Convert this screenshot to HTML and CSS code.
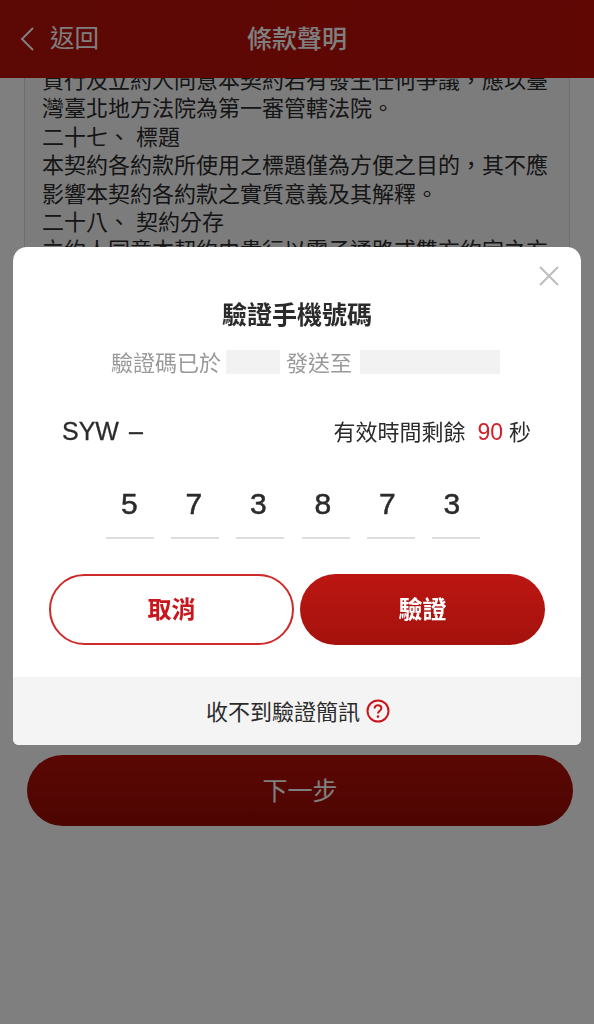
FILE: index.html
```html
<!DOCTYPE html>
<html lang="zh-Hant">
<head>
    <meta charset="UTF-8">
    <meta name="viewport" content="width=device-width, initial-scale=1.0">
    <title>條款聲明</title>
    <link rel="stylesheet" href="styles.css">
</head>
<body>
    <div class="page">
        <header class="topbar">
            <div class="back">
                <svg class="back-icon" viewBox="0 0 16 26" width="16" height="26">
                    <path d="M14 2 L3 13 L14 24" fill="none" stroke="#fff" stroke-width="2"/>
                </svg>
                <span>返回</span>
            </div>
            <h1>條款聲明</h1>
        </header>

        <section class="terms">
            <div class="terms-text">
                <p>責行及立約人同意本契約若有發生任何爭議，應以臺</p>
                <p>灣臺北地方法院為第一審管轄法院。</p>
                <p>二十七、 標題</p>
                <p>本契約各約款所使用之標題僅為方便之目的，其不應</p>
                <p>影響本契約各約款之實質意義及其解釋。</p>
                <p>二十八、 契約分存</p>
                <p>立約人同意本契約由貴行以電子通路或雙方約定之方</p>
            </div>
        </section>

        <button class="next-btn">下一步</button>
    </div>

    <!-- 驗證視窗 -->
    <div class="overlay">
        <div class="modal">
            <div class="modal-body">
                <svg class="close" viewBox="0 0 20 20" width="20" height="20">
                    <path d="M1 1 L19 19 M19 1 L1 19" stroke="#bdbdbd" stroke-width="2"/>
                </svg>
                <h2>驗證手機號碼</h2>
                <div class="sent">
                    <span>驗證碼已於</span>
                    <span class="mask mask-time"></span>
                    <span>發送至</span>
                    <span class="mask mask-phone"></span>
                </div>
                <div class="code-info">
                    <span class="prefix">SYW<i>–</i></span>
                    <span class="timer">有效時間剩餘<b>90</b>秒</span>
                </div>
                <div class="code-digits">
                    <span>5</span>
                    <span>7</span>
                    <span>3</span>
                    <span>8</span>
                    <span>7</span>
                    <span>3</span>
                </div>
                <div class="code-lines">
                    <span></span>
                    <span></span>
                    <span></span>
                    <span></span>
                    <span></span>
                    <span></span>
                </div>
                <div class="actions">
                    <button class="btn btn-outline">取消</button>
                    <button class="btn btn-solid">驗證</button>
                </div>
            </div>
            <div class="modal-foot">
                <span>收不到驗證簡訊</span>
                <svg viewBox="0 0 24 24" width="24" height="24">
                    <circle cx="12" cy="12" r="10.5" fill="none" stroke="#c8161d" stroke-width="2"/>
                    <path d="M8.6 9.4 C8.6 7.4 10.1 6.2 12 6.2 C13.9 6.2 15.4 7.4 15.4 9.2 C15.4 11.6 12 11.8 12 14.6" fill="none" stroke="#c8161d" stroke-width="2"/>
                    <circle cx="12" cy="17.6" r="1.3" fill="#c8161d"/>
                </svg>
            </div>
        </div>
    </div>
</body>
</html>
```

FILE: styles.css
```css
* {
  box-sizing: border-box;
}

html, body {
  height: 100%;
}

body {
  margin: 0;
  background: #fff;
  color: #2b2b2b;
  font-family: "Liberation Sans", "Noto Sans CJK TC", sans-serif;
  overflow: hidden;
}

.page {
  display: flex;
  flex-direction: column;
  height: 1024px;
}

/* Top bar */
.topbar {
  position: relative;
  display: flex;
  align-items: center;
  justify-content: center;
  flex: none;
  height: 78px;
  padding-bottom: 4px;
  background: linear-gradient(100deg, #b81008, #c00f08);
  color: #fff;
}

.topbar h1 {
  margin: 0;
  font-size: 25px;
  font-weight: 500;
}

.back {
  position: absolute;
  left: 19px;
  top: 24px;
  display: flex;
  align-items: center;
  gap: 15px;
  font-size: 24.5px;
  line-height: 30px;
}

.back-icon {
  display: block;
}

/* Terms */
.terms {
  flex: none;
  height: 660px;
  margin: 0 24px;
  padding: 0 17px;
  background: #f9f9f9;
  border: 1px solid #ddd;
  border-top: 0;
  overflow: hidden;
}

.terms-text {
  margin-top: -11px;
  font-size: 22px;
  line-height: 28.4px;
  white-space: nowrap;
}

.terms-text p {
  margin: 0;
}

.next-btn {
  flex: none;
  width: 546px;
  height: 71px;
  margin: 17px 0 0 27px;
  padding-bottom: 5px;
  border: 0;
  border-radius: 36px;
  background: linear-gradient(#b60f08, #9a0b04);
  color: #fff;
  font: inherit;
  font-size: 25px;
}

/* Overlay + modal */
.overlay {
  position: fixed;
  top: 0;
  left: 0;
  width: 100%;
  height: 100%;
  padding: 247px 13px 0;
  background: rgba(0, 0, 0, 0.5);
}

.modal {
  display: flex;
  flex-direction: column;
  height: 498px;
  background: #fff;
  border-radius: 14px 14px 6px 6px;
  overflow: hidden;
}

.modal-body {
  position: relative;
  flex: 1;
  padding: 52px 36px 0;
}

.close {
  position: absolute;
  top: 19px;
  right: 22px;
}

.modal-body h2 {
  margin: 0;
  color: #2b2b2b;
  font-size: 25px;
  font-weight: 700;
  line-height: 32px;
  text-align: center;
}

.sent {
  display: flex;
  align-items: center;
  height: 24px;
  margin: 19px 0 0 62px;
  color: #999;
  font-size: 22px;
}

.sent span:not(.mask) {
  margin-top: -2px;
}

.mask {
  height: 24px;
  background: #f2f2f2;
}

.mask-time {
  width: 54px;
  margin: 0 6px 0 5px;
}

.mask-phone {
  width: 140px;
  margin-left: 8px;
}

.code-info {
  display: flex;
  align-items: center;
  justify-content: space-between;
  height: 30px;
  margin: 42px 14px 0 13px;
  font-size: 22px;
}

.prefix {
  font-size: 25px;
  -webkit-text-stroke: 0.3px #2b2b2b;
}

.prefix i {
  margin-left: 10px;
  font-style: normal;
}

.timer {
  margin-top: -3px;
}

.timer b {
  margin: 0 6px 0 12px;
  color: #d0202a;
  font-weight: 400;
  font-size: 23px;
}

.code-digits {
  display: flex;
  margin: 37px 0 0 48px;
}

.code-digits span {
  width: 64.5px;
  height: 42px;
  font-size: 30px;
  line-height: 42px;
  text-align: center;
  -webkit-text-stroke: 0.5px #2b2b2b;
}

.code-lines {
  display: flex;
  gap: 17.2px;
  margin: 12px 0 0 57px;
}

.code-lines span {
  width: 48px;
  height: 2px;
  background: #ddd;
}

.actions {
  display: flex;
  gap: 6px;
  margin-top: 35px;
}

.btn {
  width: 245px;
  height: 71px;
  padding-bottom: 5px;
  border-radius: 36px;
  font: inherit;
  font-size: 24px;
  font-weight: 700;
}

.btn-outline {
  background: #fff;
  border: 2px solid #cf2a2a;
  color: #c8161d;
}

.btn-solid {
  background: linear-gradient(#bc1612, #a4120d);
  border: 0;
  color: #fff;
}

.modal-foot {
  display: flex;
  flex: none;
  align-items: center;
  justify-content: center;
  gap: 6px;
  height: 68px;
  padding-left: 2px;
  background: #f4f4f4;
  font-size: 22px;
}

.modal-foot span {
  margin-top: -3px;
}
```
